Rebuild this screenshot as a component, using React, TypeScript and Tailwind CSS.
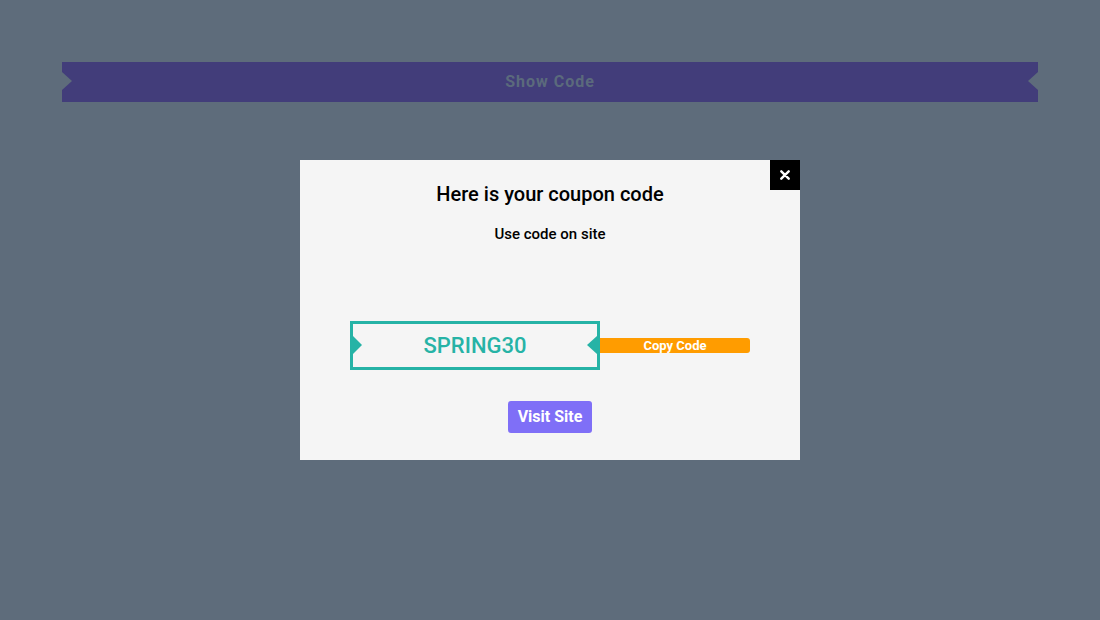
import React from "react";

export default function App() {
  return (
    <div
      className="w-full h-[620px] bg-[#5e6c7b] pt-[62px] px-[62px]"
      style={{ fontFamily: "Roboto, 'Liberation Sans', sans-serif" }}
    >
      <div className="relative h-[40px] bg-[#423d7a] flex items-center justify-center">
        <div className="absolute left-0 top-[10px] w-0 h-0 border-t-[9.5px] border-b-[9.5px] border-l-[10px] border-t-transparent border-b-transparent border-l-[#5e6c7b]" />
        <div className="absolute right-0 top-[10px] w-0 h-0 border-t-[9.5px] border-b-[9.5px] border-r-[10px] border-t-transparent border-b-transparent border-r-[#5e6c7b]" />
        <span className="text-[16px] font-bold tracking-[1px] text-[#5b6a7c]">Show Code</span>
      </div>

      <div className="relative mx-auto mt-[58px] w-[500px] h-[300px] bg-[#f5f5f5] flex flex-col items-center pt-[22px]">
        <button className="absolute top-0 right-0 w-[30px] h-[30px] bg-black flex items-center justify-center">
          <svg width="10" height="10" viewBox="0 0 10 10">
            <path d="M1.3 1.3 L8.7 8.7 M8.7 1.3 L1.3 8.7" stroke="white" strokeWidth="2.4" strokeLinecap="round" />
          </svg>
        </button>
        <h1 className="text-[20px] leading-[24px] font-medium text-black">Here is your coupon code</h1>
        <p className="mt-[19px] text-[15px] leading-[18px] font-medium text-black">Use code on site</p>

        <div className="mt-[78px] flex items-center">
          <div className="relative w-[250px] h-[49px] border-[3px] border-[#26b3a6] flex items-center justify-center">
            <div className="absolute left-0 top-[12px] w-0 h-0 border-t-[9px] border-b-[9px] border-l-[9px] border-t-transparent border-b-transparent border-l-[#26b3a6]" />
            <div className="absolute right-0 top-[12px] w-0 h-0 border-t-[9px] border-b-[9px] border-r-[10px] border-t-transparent border-b-transparent border-r-[#26b3a6]" />
            <span className="text-[22px] font-medium text-[#26b3a6]">SPRING30</span>
          </div>
          <div className="w-[150px] h-[15px] bg-[#ff9c00] rounded-r-[3px] flex items-center justify-center">
            <span className="text-[13px] leading-[15px] font-bold text-white">Copy Code</span>
          </div>
        </div>

        <button className="mt-[31px] h-[32px] w-[84px] bg-[#7f6ff7] rounded-[3px] text-white text-[16px] font-bold flex items-center justify-center">
          Visit Site
        </button>
      </div>
    </div>
  );
}
